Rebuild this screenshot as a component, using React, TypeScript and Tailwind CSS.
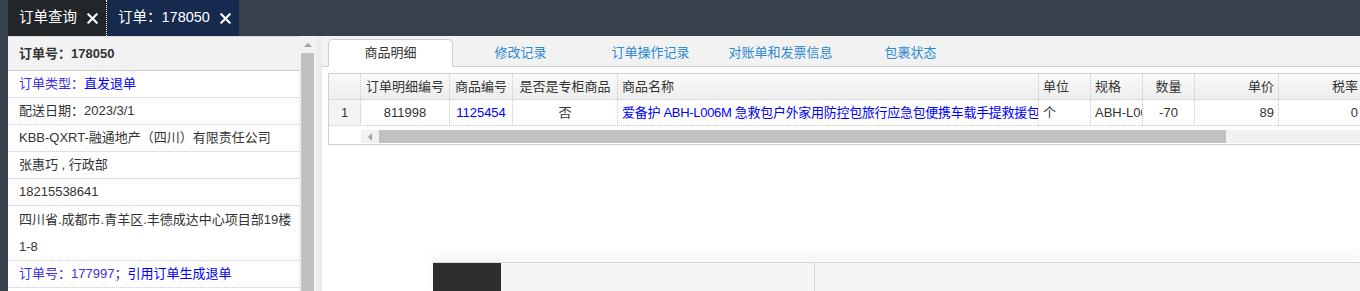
import { X } from 'lucide-react';

// 左侧订单信息行
const INFO_ROWS: { label?: string; value: string; extra?: string; link?: boolean }[] = [
  { label: '订单类型：', value: '直发退单', link: true },
  { value: '配送日期：2023/3/1' },
  { value: 'KBB-QXRT-融通地产（四川）有限责任公司' },
  { value: '张惠巧 , 行政部' },
  { value: '18215538641' },
  { value: '四川省.成都市.青羊区.丰德成达中心项目部19楼', extra: '1-8' },
  { label: '订单号：177997；', value: '引用订单生成退单', link: true },
];

const TABS = ['商品明细', '修改记录', '订单操作记录', '对账单和发票信息', '包裹状态'];

// 表格列：宽度、对齐
const COLUMNS = [
  { title: '', w: 'w-[32px]', align: 'justify-center', value: '1', gray: true },
  { title: '订单明细编号', w: 'w-[89px]', align: 'justify-center', value: '811998' },
  { title: '商品编号', w: 'w-[63px]', align: 'justify-center', value: '1125454', link: true },
  { title: '是否是专柜商品', w: 'w-[105px]', align: 'justify-center', value: '否' },
  {
    title: '商品名称',
    w: 'w-[421px]',
    align: 'justify-start',
    value: '爱备护 ABH-L006M 急救包户外家用防控包旅行应急包便携车载手提救援包',
    link: true,
    tight: true,
  },
  { title: '单位', w: 'w-[52px]', align: 'justify-start', value: '个' },
  { title: '规格', w: 'w-[52px]', align: 'justify-start', value: 'ABH-L006M' },
  { title: '数量', w: 'w-[52px]', align: 'justify-center', value: '-70' },
  { title: '单价', w: 'w-[84px]', align: 'justify-end', value: '89' },
  { title: '税率', w: 'w-[84px]', align: 'justify-end', value: '0' },
];

function TopTab({ title, active }: { title: string; active?: boolean }) {
  return (
    <div
      className={
        active
          ? 'flex h-full items-center gap-[7px] bg-[#152a4d] pl-[11px] pr-[5px]'
          : 'flex h-full items-center gap-[7px] border-r border-dotted border-white bg-[#232629] pl-[11px] pr-[5px]'
      }
    >
      <span className="text-[14.5px] text-white">{title}</span>
      <X size={17} strokeWidth={3} className="text-white" />
    </div>
  );
}

export default function App() {
  return (
    <div className="relative h-[291px] w-[1360px] overflow-hidden bg-white font-['Liberation_Sans','Noto_Sans_CJK_SC',sans-serif] text-[13px] text-[#333]">
      {/* 顶部标签栏 */}
      <div className="flex h-[36px] bg-[#36414b] pl-[8px]">
        <TopTab title="订单查询" />
        <TopTab title="订单：178050" active />
      </div>

      <div className="flex h-[255px]">
        <div className="w-[8px] bg-[#36414b]" />

        {/* 左侧订单信息 */}
        <div className="flex w-[291px] flex-col overflow-hidden">
          <div className="flex h-[35px] items-center border-y border-t-[#d9d9d9] border-b-[#c8c8c8] bg-[#f2f2f2] pl-[11px] font-bold">
            订单号：178050
          </div>
          {INFO_ROWS.map((r, i) => (
            <div
              key={i}
              className={
                r.extra
                  ? 'whitespace-nowrap border-b border-dotted border-[#c8c8c8] pl-[11px] leading-[27px]'
                  : 'border-b border-dotted border-[#c8c8c8] pl-[11px] pr-[8px] leading-[26px]'
              }
            >
              {r.label && <span className="text-[#3d2fe0]">{r.label}</span>}
              <span className={r.link ? 'text-[#0000ff]' : ''}>{r.value}</span>
              {r.extra && (
                <>
                  <br />
                  {r.extra}
                </>
              )}
            </div>
          ))}
        </div>

        {/* 左侧滚动条 */}
        <div className="flex w-[17px] flex-col bg-[#f1f1f1]">
          <div className="flex h-[17px] items-center justify-center">
            <div className="h-0 w-0 border-x-[4px] border-b-[4px] border-x-transparent border-b-[#a3a3a3]" />
          </div>
          <div className="mx-[2px] flex-1 bg-[#c1c1c1]" />
        </div>
        <div className="w-[6px] bg-[#ececec]" />

        {/* 右侧内容 */}
        <div className="relative flex-1 overflow-hidden">
          <div className="flex h-[31px] items-end gap-[5px] border-b border-[#cfcfcf] bg-[#f2f2f2] pl-[6px]">
            {TABS.map((t, i) =>
              i === 0 ? (
                <div
                  key={t}
                  className="-mb-px flex h-[28px] w-[125px] shrink-0 items-center justify-center rounded-t-[5px] border border-[#cfcfcf] border-b-white bg-white text-[#333]"
                >
                  {t}
                </div>
              ) : (
                <div key={t} className="flex h-[27px] w-[125px] shrink-0 items-center justify-center text-[#2a8ad4]">
                  {t}
                </div>
              ),
            )}
          </div>

          <div className="ml-[6px] mt-[6px] w-[1034px] border-y border-l border-[#cfcfcf]">
            <div className="flex h-[26px] border-b border-[#dcdcdc] bg-linear-to-b from-[#fafafa] to-[#ededed]">
              {COLUMNS.map((c, i) => (
                <div
                  key={i}
                  className={`flex shrink-0 items-center overflow-hidden whitespace-nowrap border-r border-dotted border-[#c8c8c8] px-[4px] ${c.w} ${c.align}`}
                >
                  {c.title}
                </div>
              ))}
            </div>
            <div className="flex h-[26px] border-b border-dotted border-[#c8c8c8]">
              {COLUMNS.map((c, i) => (
                <div
                  key={i}
                  className={`flex shrink-0 items-center overflow-hidden whitespace-nowrap border-r border-dotted border-[#c8c8c8] px-[4px] ${c.w} ${c.align} ${c.gray ? 'bg-[#f3f3f3]' : ''} ${c.link ? 'text-[#0000ff]' : ''} ${c.tight ? 'tracking-[-0.3px]' : ''}`}
                >
                  {c.value}
                </div>
              ))}
            </div>
            {/* 横向滚动条 */}
            <div className="mb-[1px] mt-[4px] flex h-[13px]">
              <div className="w-[32px]" />
              <div className="flex w-[18px] items-center justify-center bg-[#f1f1f1]">
                <div className="h-0 w-0 border-y-[4px] border-r-[4px] border-y-transparent border-r-[#a3a3a3]" />
              </div>
              <div className="w-[847px] bg-[#c1c1c1]" />
              <div className="flex-1 bg-[#f1f1f1]" />
            </div>
          </div>
        </div>
      </div>

      {/* 底部浮动面板 */}
      <div className="absolute left-[433px] right-0 top-[262px] flex h-[40px] border-t border-[#d9d9d9] shadow-[0_-8px_12px_rgba(0,0,0,0.04)]">
        <div className="w-[68px] bg-[#2e2e2e]" />
        <div className="w-[314px] border-r border-[#d9d9d9] bg-[#f5f5f5]" />
        <div className="flex-1 bg-[#f4f4f4]" />
      </div>
    </div>
  );
}
